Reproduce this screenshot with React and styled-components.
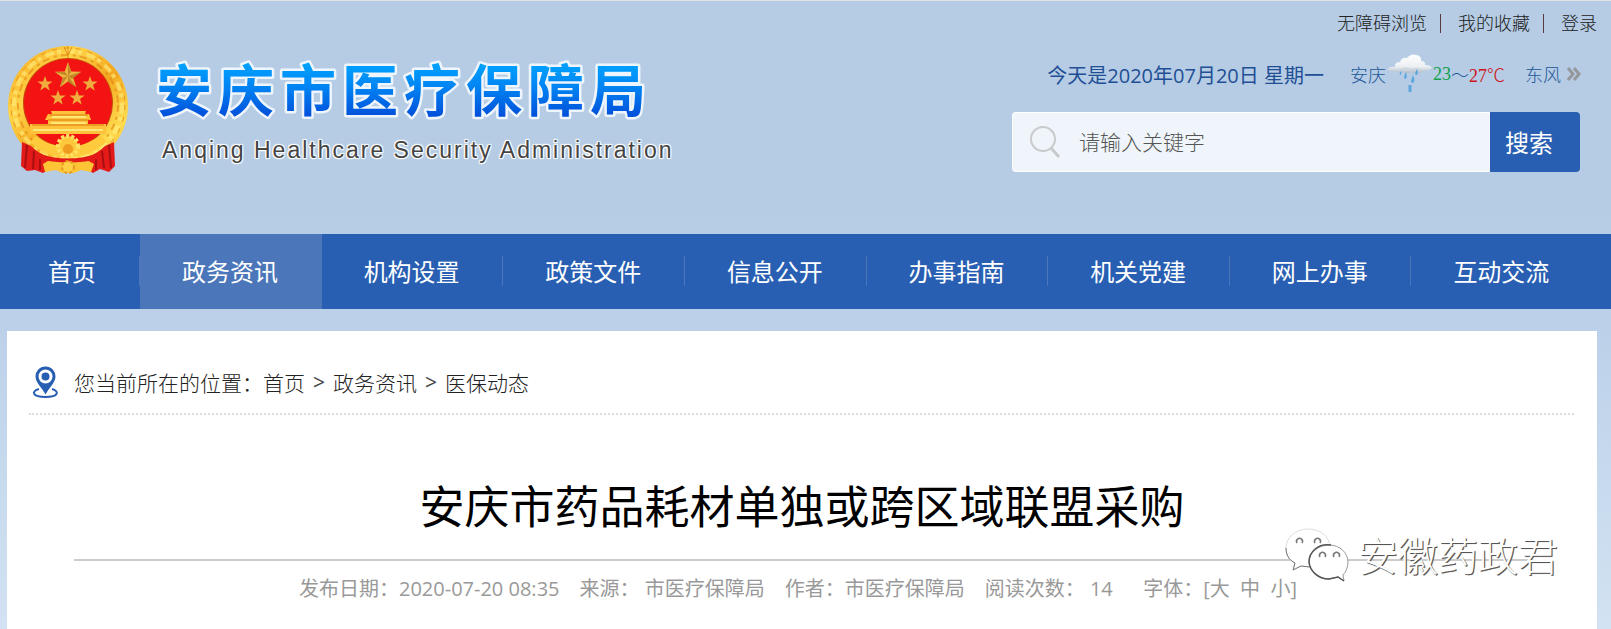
import React, { useState } from 'react';
import styled, { createGlobalStyle } from 'styled-components';

const GlobalStyle = createGlobalStyle`
  * {
    box-sizing: border-box;
  }

  body {
    margin: 0;
    font-family: 'Open Sans', 'Noto Sans CJK SC', sans-serif;
    color: #444;
  }

  a {
    color: inherit;
    text-decoration: none;
  }

  button, input {
    font-family: inherit;
  }
`;

const Page = styled.div`
  display: flex;
  flex-direction: column;
  min-height: 100vh;
  border-top: 1px solid #dfe3e6;
  background: linear-gradient(180deg, #b5cce4 0%, #b5cce4 32%, #bcd1e9 52%, #d2e2f2 100%);
`;

const Header = styled.header`
  display: flex;
  justify-content: space-between;
  height: 233px;
`;

const Brand = styled.a`
  display: flex;
  gap: 28px;
  padding: 45px 0 0 8px;
`;

const BrandText = styled.div`
  padding-top: 11px;
`;

const BrandName = styled.svg`
  display: block;
  width: 500px;
  height: 66px;
  overflow: visible;

  text {
    font-family: 'Noto Sans CJK SC', sans-serif;
    font-size: 56px;
    font-weight: 700;
    letter-spacing: 6px;
    stroke: #eef5fc;
    stroke-width: 5px;
    stroke-linejoin: round;
    paint-order: stroke;
  }
`;

const BrandSub = styled.div`
  padding: 11px 0 0 6px;
  font-family: 'Liberation Sans', sans-serif;
  font-size: 23px;
  line-height: 32px;
  letter-spacing: 2px;
  color: #444;
  text-shadow: 0 0 2px #fff, 1px 1px 1px #fff, -1px -1px 1px #fff, 1px -1px 1px #fff, -1px 1px 1px #fff;
`;

const Tools = styled.div`
  display: flex;
  flex-direction: column;
  align-items: flex-end;
`;

const TopLinks = styled.nav`
  display: flex;
  align-items: center;
  gap: 13px;
  padding: 9px 14px 0 0;
  font-size: 18px;
  font-weight: 300;
  line-height: 26px;
  color: #222;
`;

const Bar = styled.span`
  width: 1px;
  height: 19px;
  margin-right: 4px;
  background: #5a3a42;
`;

const InfoRow = styled.div`
  display: flex;
  align-items: center;
  height: 40px;
  margin: 18px 30px 0 0;
`;

const Today = styled.span`
  margin-right: 26px;
  font-size: 20px;
  color: #1f4f94;
`;

const Weather = styled.a`
  display: flex;
  align-items: center;
  font-family: 'Liberation Serif', 'Noto Sans CJK SC', serif;
  font-size: 18px;
  font-weight: 300;
  color: #22579a;

  svg {
    display: block;
  }
`;

const Temp = styled.span`
  color: ${props => props.$color};
`;

const Wind = styled.span`
  margin: 0 6px 0 20px;
`;

const SearchForm = styled.form`
  display: flex;
  width: 568px;
  height: 60px;
  margin: 18px 31px 0 0;
`;

const SearchField = styled.label`
  display: flex;
  flex: 1;
  align-items: center;
  gap: 18px;
  padding-left: 16px;
  background: #eff5fa;
  border: 1px solid #fff;
  border-right: 0;
  border-radius: 4px 0 0 4px;
`;

const SearchInput = styled.input`
  flex: 1;
  min-width: 0;
  padding: 0;
  border: 0;
  outline: 0;
  background: transparent;
  font-size: 21px;
  font-weight: 300;
  color: #444;

  &::placeholder {
    color: #555;
    opacity: 1;
  }
`;

const SearchButton = styled.button`
  width: 90px;
  padding: 0 12px 2px 0;
  border: 0;
  border-radius: 0 4px 4px 0;
  background: #285fb3;
  color: #fff;
  font-size: 24px;
  cursor: pointer;
`;

const Nav = styled.nav`
  display: grid;
  grid-template-columns: 140px repeat(8, 1fr);
  height: 75px;
  padding-right: 18px;
  background: #285fb3;
`;

const NavItem = styled.a`
  display: flex;
  align-items: center;
  justify-content: space-between;
  padding-left: ${props => (props.$first ? '48px' : '42px')};
  padding-bottom: 2px;
  background: ${props => (props.$active ? '#4b76b9' : 'transparent')};
  color: #fff;
  font-size: 24px;
  white-space: nowrap;

  &::after {
    content: '';
    width: 1px;
    height: 30px;
    background: #4b76b9;
  }

  &:last-child::after {
    display: none;
  }
`;

const Panel = styled.main`
  position: relative;
  flex: 1;
  margin: 22px 14px 0 7px;
  padding: 31px 23px 0 22px;
  background: #fff;
`;

const Crumbs = styled.nav`
  display: flex;
  align-items: center;
  height: 53px;
  padding: 0 0 11px 3px;
  border-bottom: 2px dotted #ddd;
  font-size: 21px;
  font-weight: 300;
  color: #222;

  svg {
    margin-right: 15px;
  }
`;

const Separator = styled.span`
  padding: 0 8px;
  font-weight: 400;
  color: #444;
`;

const Article = styled.article`
  padding: 59px 44px 0 45px;
  text-align: center;
`;

const Title = styled.h1`
  margin: 0;
  padding-bottom: 19px;
  border-bottom: 2px solid #ccc;
  font-size: 45px;
  font-weight: 400;
  line-height: 66px;
  color: #000;
`;

const Meta = styled.div`
  display: flex;
  justify-content: center;
  gap: 20px;
  padding: 14px 8px 0 0;
  font-size: 20px;
  line-height: 28px;
  color: #999;
  white-space: pre;
`;

const SizeButton = styled.button`
  padding: 0;
  border: 0;
  background: none;
  color: inherit;
  font-size: inherit;
  line-height: inherit;
  cursor: pointer;
`;

// floats over the end of the title rule
const Watermark = styled.div`
  position: absolute;
  top: 192px;
  right: 39px;
  display: flex;
  align-items: center;
  gap: 9px;
  color: #fff;
  font-size: 40px;
  font-weight: 300;
  line-height: 66px;
  text-shadow: 1px 1px 0 #555, 1px 1px 1px #888;
`;

const starPoints = (cx, cy, r) =>
    Array.from({ length: 10 }, (_, i) => {
        const radius = i % 2 ? r * 0.4 : r;
        const angle = (Math.PI / 5) * i - Math.PI / 2;
        return `${(cx + radius * Math.cos(angle)).toFixed(1)},${(cy + radius * Math.sin(angle)).toFixed(1)}`;
    }).join(' ');

const Emblem = () => (
    <svg width="120" height="128" viewBox="0 0 120 128" aria-hidden="true">
        <defs>
            <linearGradient id="gold" x1="0" y1="0" x2="1" y2="1">
                <stop offset="0" stopColor="#f5a61d" />
                <stop offset="0.3" stopColor="#ffd348" />
                <stop offset="0.55" stopColor="#f3a81f" />
                <stop offset="0.8" stopColor="#ffdc50" />
                <stop offset="1" stopColor="#ee9d1c" />
            </linearGradient>
        </defs>
        <circle cx="60" cy="60" r="60" fill="url(#gold)" />
        <circle cx="60" cy="59" r="54" fill="none" stroke="#ffee80" strokeWidth="4" strokeDasharray="9 3 4 5" opacity="0.6" />
        <circle cx="60" cy="59" r="50" fill="none" stroke="#dd8412" strokeWidth="2" strokeDasharray="7 5 3 4" opacity="0.6" />
        <circle cx="60" cy="59" r="57" fill="none" stroke="#e8961a" strokeWidth="1" strokeDasharray="5 7" />
        <circle cx="60" cy="57" r="45" fill="#c94a0c" />
        <circle cx="60" cy="57" r="44" fill="#f31313" />
        <path d="M60 0v12M56 1l4 8 4-8" stroke="#e08a10" fill="none" />
        <polygon points={starPoints(60, 30, 14)} fill="#eeb23f" />
        <path d="M60 30V16l3 10zM60 30l13-4-9 7zM60 30l8 11-8-5zM60 30l-8 11 3-9zM60 30l-13-4 10 0z" fill="#9c6a1c" opacity="0.6" />
        {[[37, 38], [82, 38], [50, 52], [69, 52]].map(([x, y]) => (
            <polygon key={x} points={starPoints(x, y, 8)} fill="#f0ac3c" />
        ))}
        <path d="M43 65h35l-1 3h4l2 6h-3v4h18v10H22v-10h18v-4h-3l3-6h4z" fill="#ffc23a" />
        <path d="M41 69h39M40 74h41M24 79h72" stroke="#d57a12" />
        <path d="M44 71h34M43 77h35M25 84h70" stroke="#ffe878" strokeWidth="2" />
        <path d="M14 96l9 4q14 14 37 14t37-14l9-4 1 24-6 6-9-3-7 4-7-4H42l-7 4-8-3-8 1-6-5z" fill="#e31a17" />
        <path d="M19 99l-2 23M26 105l-1 18M32 109v15M101 99l2 23M94 105l2 17M88 109v15" stroke="#a90f12" strokeWidth="2" />
        <path d="M22 96q15 15 38 15t38-15l-5-7q-12 8-20 10H47q-10-2-19-9z" fill="#ffcb3d" />
        <circle cx="60" cy="100" r="10" fill="#ffc83c" stroke="#ffe263" strokeWidth="4" strokeDasharray="3 2" />
        <circle cx="60" cy="103" r="5" fill="#ee9b20" />
        <path d="M35 118l8-5 9 2q8-6 16 0l9-2 9 5-3 8-10-2-7 3H54l-6-3-11 2z" fill="#ffc436" />
        <path d="M29 107q31 11 62 0l3 5q-33 9-67 0z" fill="#e31a17" />
        <circle cx="60" cy="121" r="6" fill="#ffcf45" stroke="#e9981e" strokeWidth="2" strokeDasharray="3 2" />
    </svg>
);

const Cloud = () => (
    <svg width="47" height="40" viewBox="0 0 47 40" role="img" aria-label="雨">
        <defs>
            <linearGradient id="cloud" x1="0" y1="0" x2="0" y2="1">
                <stop offset="0" stopColor="#fff" />
                <stop offset="0.65" stopColor="#eceff2" />
                <stop offset="1" stopColor="#aebac8" />
            </linearGradient>
        </defs>
        <path d="M1 16q3-4 8-3-1-5 5-5 2-5 7-4 4-5 9-3 6 1 5 6 5 0 4 4 6 0 7 3-3 3-9 3-6 4-12 1-5 3-9-1-9 2-15-1z" fill="url(#cloud)" />
        <path d="M14 16q7-4 11 0 6-3 10 0" fill="none" stroke="#c9d1d9" />
        <path d="M20 18q-3 6-1 7 3 0 1-7zM27 21q-3 7-1 8 4 0 1-8zM31 15q-3 5-1 6 3 0 1-6zM15 17q-2 3-1 4 2 0 1-4z" fill="#5ba6dc" />
        <path d="M24 31v7" stroke="#5ba6dc" strokeWidth="3" />
    </svg>
);

const Pin = () => (
    <svg width="27" height="32" viewBox="0 0 27 32" fill="none" stroke="#285fb3" aria-hidden="true">
        <path d="M7 23c-8 2-7 8 6.500 8s14-6 6.500-8" strokeWidth="2" />
        <path d="M13.500 1.500c-5.500 0-9 4-9 9 0 6 5 9 9 16 4-7 9-10 9-16 0-5-3.500-9-9-9z" fill="#285fb3" strokeWidth="2" />
        <circle cx="13.500" cy="10.500" r="5.500" fill="#285fb3" stroke="#fff" strokeWidth="3" />
    </svg>
);

const ChatMark = () => (
    <svg width="64" height="56" viewBox="0 0 64 56" fill="#fff" aria-hidden="true">
        <path d="M23 1C10 1 1 10 1 20c0 7 3 12 9 15l-2 7 8-4 9 1c10 0 20-7 20-19S35 1 23 1z" stroke="#ddd" />
        <path d="M1 20c0 7 3 12 9 15l-2 7 8-4 9 1" fill="none" stroke="#777" />
        <path d="M44 17c-11 0-20 8-20 17s9 17 20 17l9-2 6 4-1-6c3-3 5-8 5-13 0-9-8-17-19-17z" stroke="#999" />
        <path d="M46 17c-13-2-22 7-22 17 1 9 9 17 20 17l9-2 6 4" fill="none" stroke="#555" strokeWidth="1.500" />
        <path d="M12 15a3 3 0 1 1 5 0M30 15a3 3 0 1 1 5 0M35 29a3 3 0 1 1 5 0M49 29a3 3 0 1 1 5 0" fill="none" stroke="#777" strokeWidth="1.500" />
    </svg>
);

const navItems = ['首页', '政务资讯', '机构设置', '政策文件', '信息公开', '办事指南', '机关党建', '网上办事', '互动交流'];

const SiteHeader = () => {
    const [keyword, setKeyword] = useState('');

    return (
        <Header>
            <Brand href="#">
                <Emblem />
                <BrandText>
                    <BrandName role="img" aria-label="安庆市医疗保障局">
                        <defs>
                            <linearGradient id="name" x1="0" y1="0" x2="0" y2="1">
                                <stop offset="0.2" stopColor="#00a4ff" />
                                <stop offset="0.5" stopColor="#0085f3" />
                                <stop offset="0.85" stopColor="#0052db" />
                            </linearGradient>
                        </defs>
                        <text x="0" y="54" fill="url(#name)">安庆市医疗保障局</text>
                    </BrandName>
                    <BrandSub>Anqing Healthcare Security Administration</BrandSub>
                </BrandText>
            </Brand>

            <Tools>
                <TopLinks>
                    <a href="#">无障碍浏览</a>
                    <Bar />
                    <a href="#">我的收藏</a>
                    <Bar />
                    <a href="#">登录</a>
                </TopLinks>
                <InfoRow>
                    <Today>今天是2020年07月20日 星期一</Today>
                    <Weather href="#">
                        安庆
                        <Cloud />
                        <Temp $color="#12a04c">23</Temp>
                        ～
                        <Temp $color="#d0131b">27℃</Temp>
                        <Wind>东风</Wind>
                        <svg width="14" height="14" viewBox="0 0 14 14" fill="none" stroke="#96979a" strokeWidth="3">
                            <path d="M1 1l5 6-5 6M7 1l5 6-5 6" />
                        </svg>
                    </Weather>
                </InfoRow>
                <SearchForm onSubmit={e => e.preventDefault()}>
                    <SearchField>
                        <svg width="32" height="34" viewBox="0 0 32 34" fill="none" stroke="#c8cacc" strokeWidth="2" aria-hidden="true">
                            <circle cx="14" cy="14" r="12" />
                            <path d="M22 23l8 9" strokeWidth="3" />
                        </svg>
                        <SearchInput
                            type="text"
                            aria-label="请输入关键字"
                            placeholder="请输入关键字"
                            value={keyword}
                            onChange={e => setKeyword(e.target.value)}
                        />
                    </SearchField>
                    <SearchButton type="submit">搜索</SearchButton>
                </SearchForm>
            </Tools>
        </Header>
    );
};

const App = () => {
    const [active, setActive] = useState('政务资讯');

    return (
        <Page>
            <GlobalStyle />
            <SiteHeader />

            <Nav>
                {navItems.map((item, i) => (
                    <NavItem
                        key={item}
                        href="#"
                        $first={i === 0}
                        $active={item === active}
                        onClick={() => setActive(item)}
                    >
                        {item}
                    </NavItem>
                ))}
            </Nav>

            <Panel>
                <Crumbs>
                    <Pin />
                    <span>您当前所在的位置：</span>
                    <a href="#">首页</a>
                    <Separator>&gt;</Separator>
                    <a href="#">政务资讯</a>
                    <Separator>&gt;</Separator>
                    <a href="#">医保动态</a>
                </Crumbs>

                <Article>
                    <Title>安庆市药品耗材单独或跨区域联盟采购</Title>
                    <Meta>
                        <span>发布日期：2020-07-20 08:35</span>
                        <span>来源： 市医疗保障局</span>
                        <span>作者：市医疗保障局</span>
                        <span>阅读次数： 14</span>
                        <span>
                            {'  字体：['}
                            <SizeButton type="button">大</SizeButton>
                            {'  '}
                            <SizeButton type="button">中</SizeButton>
                            {'  '}
                            <SizeButton type="button">小</SizeButton>
                            ]
                        </span>
                    </Meta>
                </Article>

                <Watermark>
                    <ChatMark />
                    <span>安徽药政君</span>
                </Watermark>
            </Panel>
        </Page>
    );
};

export default App;
